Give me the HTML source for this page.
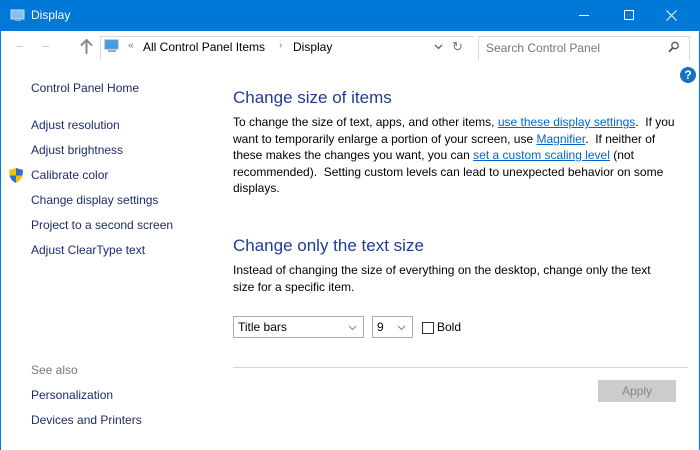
<!DOCTYPE html>
<html><head><style>
body{margin:0;width:700px;height:450px;overflow:hidden;font-family:"Liberation Sans",sans-serif;font-size:12px;background:#fff;position:relative;color:#000}
.abs{position:absolute}
.tb{left:0;top:0;width:700px;height:31px;background:#0078d7;color:#fff}
.side a{position:absolute;left:31px;color:#1e2a6e;text-decoration:none;font-size:12px}
h2{position:absolute;left:233px;margin:0;font-weight:normal;font-size:17px;color:#1e3c96}
p{position:absolute;left:233px;margin:0;width:444px;line-height:16.5px;font-size:12px}
p a{color:#0066cc;text-decoration:underline}
.sel{position:absolute;top:316px;height:22px;border:1px solid #adadad;box-sizing:border-box;padding:3px 4px;font-size:12px}
.chev{position:absolute;right:5px;top:5px}
</style></head><body>
<div class="abs tb">
 <svg class="abs" style="left:10px;top:9px" width="15" height="13"><rect x="1" y="1" width="13" height="9" fill="#7ec3ee" stroke="#cde" /><rect x="5" y="10" width="6" height="2" fill="#9ab"/></svg>
 <div class="abs" style="left:31px;top:8px;font-size:12px">Display</div>
 <div class="abs" style="left:579px;top:15px;width:10px;height:1px;background:#fff"></div>
 <div class="abs" style="left:624px;top:10px;width:8px;height:8px;border:1px solid #fff"></div>
 <svg class="abs" style="left:666px;top:10px" width="11" height="11"><path d="M0.5 0.5 L10.5 10.5 M10.5 0.5 L0.5 10.5" stroke="#fff" stroke-width="1"/></svg>
</div>
<div class="abs" style="left:0;top:31px;width:1px;height:419px;background:#0078d7"></div>
<div class="abs" style="left:699px;top:31px;width:1px;height:419px;background:#0078d7"></div>
<div class="abs" style="left:16px;top:46px;width:7px;height:1px;background:#ccc"></div>
<div class="abs" style="left:42px;top:46px;width:7px;height:1px;background:#ccc"></div>
<svg class="abs" style="left:80px;top:39px" width="13" height="15"><path d="M6.5 1 V15 M1 6.5 L6.5 1 L12 6.5" stroke="#888" stroke-width="2" fill="none"/></svg>
<div class="abs" style="left:100px;top:36px;width:373px;height:23px;border-top:1px solid #d9d9d9;border-left:1px solid #d9d9d9"></div>
<svg class="abs" style="left:104px;top:39px" width="16" height="15"><rect x="1" y="1" width="13" height="9" fill="#3aa0e0" stroke="#89c"/><rect x="4" y="11" width="8" height="2" fill="#9ab"/></svg>
<div class="abs" style="left:128px;top:40px;color:#777;font-size:10px">«</div>
<div class="abs" style="left:143px;top:40px">All Control Panel Items</div>
<div class="abs" style="left:279px;top:40px;color:#777;font-size:10px">›</div>
<div class="abs" style="left:293px;top:40px">Display</div>
<svg class="abs" style="left:434px;top:44px" width="9" height="6"><path d="M1 1 L4.5 4.5 L8 1" stroke="#666" stroke-width="1.3" fill="none"/></svg>
<div class="abs" style="left:452px;top:39px;color:#777;font-size:13px">↻</div>
<div class="abs" style="left:478px;top:36px;width:210px;height:23px;border:1px solid #d9d9d9;border-bottom:none"></div>
<div class="abs" style="left:486px;top:41px;color:#777">Search Control Panel</div>
<svg class="abs" style="left:668px;top:41px" width="12" height="12"><circle cx="7" cy="4.5" r="3.2" stroke="#555" stroke-width="1.3" fill="none"/><path d="M4.7 7 L1 10.7" stroke="#555" stroke-width="1.8"/></svg>
<div class="abs" style="left:680px;top:67px;width:16px;height:16px;border-radius:50%;background:#1a6fc8;color:#fff;font-weight:bold;text-align:center;line-height:16px;font-size:12px">?</div>
<div class="side">
<a style="top:81px">Control Panel Home</a>
<a style="top:118px">Adjust resolution</a>
<a style="top:143px">Adjust brightness</a>
<a style="top:168px">Calibrate color</a>
<a style="top:193px">Change display settings</a>
<a style="top:218px">Project to a second screen</a>
<a style="top:243px">Adjust ClearType text</a>
<a style="top:363px;color:#777">See also</a>
<a style="top:388px">Personalization</a>
<a style="top:413px">Devices and Printers</a>
</div>
<svg class="abs" style="left:8px;top:167px" width="16" height="17"><path d="M8 1 L15 3 L14 10 Q12 14 8 16 Q4 14 2 10 L1 3 Z" fill="#f5c000"/><path d="M8 1 L15 3 L14.5 8.5 L8 8.5 Z" fill="#2a6fd0"/><path d="M8 8.5 L1.5 8.5 Q3 14 8 16 Z" fill="#2a6fd0"/></svg>
<h2 style="top:88px">Change size of items</h2>
<p style="top:114px">To change the size of text, apps, and other items, <a>use these display settings</a>.&nbsp; If you want to temporarily enlarge a portion of your screen, use <a>Magnifier</a>.&nbsp; If neither of these makes the changes you want, you can <a>set a custom scaling level</a> (not recommended).&nbsp; Setting custom levels can lead to unexpected behavior on some displays.</p>
<h2 style="top:236px">Change only the text size</h2>
<p style="top:262px;width:435px">Instead of changing the size of everything on the desktop, change only the text size for a specific item.</p>
<div class="sel" style="left:233px;width:131px">Title bars<svg class="chev" width="9" height="6" style="right:6px;top:8px"><path d="M1 1 L4.5 4.5 L8 1" stroke="#888" stroke-width="1.1" fill="none"/></svg></div>
<div class="sel" style="left:372px;width:41px">9<svg class="chev" width="9" height="6" style="right:6px;top:8px"><path d="M1 1 L4.5 4.5 L8 1" stroke="#888" stroke-width="1.1" fill="none"/></svg></div>
<div class="abs" style="left:422px;top:322px;width:10px;height:10px;border:1px solid #333"></div>
<div class="abs" style="left:437px;top:320px">Bold</div>
<div class="abs" style="left:233px;top:367px;width:455px;height:1px;background:#d4d4d4"></div>
<div class="abs" style="left:598px;top:380px;width:78px;height:22px;background:#ccc;color:#888;text-align:center;line-height:22px">Apply</div>
</body></html>
